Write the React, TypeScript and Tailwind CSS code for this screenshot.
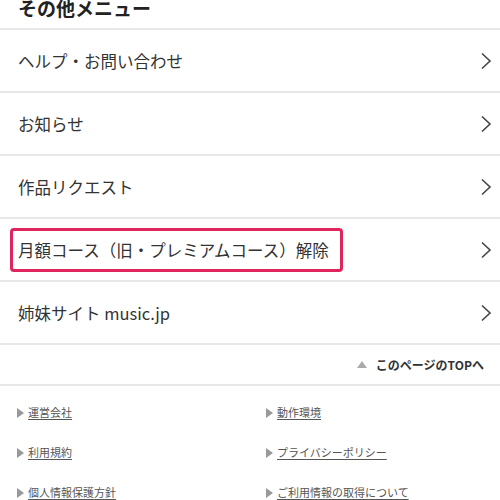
const menuItems = [
  { label: "ヘルプ・お問い合わせ" },
  { label: "お知らせ" },
  { label: "作品リクエスト" },
  { label: "月額コース（旧・プレミアムコース）解除", highlight: true },
  { label: "姉妹サイト music.jp" },
];

const footerLinks = [
  "運営会社",
  "動作環境",
  "利用規約",
  "プライバシーポリシー",
  "個人情報保護方針",
  "ご利用情報の取得について",
];

function Chevron() {
  return (
    <svg width="12" height="18" viewBox="0 0 12 18" fill="none" className="text-[#444]">
      <polyline points="2,1.5 10,9 2,16.5" stroke="currentColor" strokeWidth="1.6" />
    </svg>
  );
}

export default function App() {
  return (
    <div
      className="h-[500px] w-[500px] overflow-hidden bg-white text-[#333]"
      style={{ fontFamily: '"Noto Sans CJK JP", "Noto Sans", sans-serif' }}
    >
      {/* Section heading, scrolled partly out of view */}
      <div className="flex h-[30px] items-end border-b-2 border-[#e8e8e8] px-[18px] pb-[11px]">
        <h2 className="text-[19px] font-bold leading-none text-[#222]">その他メニュー</h2>
      </div>

      <ul>
        {menuItems.map((item) => (
          <li
            key={item.label}
            className="flex h-[63px] items-center justify-between border-b-2 border-[#e8e8e8] pr-[8px]"
          >
            {item.highlight ? (
              <span className="ml-[10px] rounded-[4px] border-[3px] border-[#e0245c] py-[6px] pl-[5px] pr-[11px] text-[16.5px] leading-[26px]">
                {item.label}
              </span>
            ) : (
              <span className="pl-[18px] text-[16.5px] leading-[26px]">{item.label}</span>
            )}
            <Chevron />
          </li>
        ))}
      </ul>

      <div className="flex h-[41px] items-center justify-end border-b-2 border-[#e8e8e8] pr-[16px]">
        <span className="mr-[9px] h-0 w-0 border-x-[5px] border-b-[7px] border-x-transparent border-b-[#aaa]" />
        <span className="text-[12px] font-bold text-[#333]">このページのTOPへ</span>
      </div>

      <div className="grid grid-cols-2 gap-y-[21px] pt-[17px]">
        {footerLinks.map((link, i) => (
          <div
            key={link}
            className={`flex items-center ${i % 2 === 0 ? "pl-[17px]" : "pl-[16px]"}`}
          >
            <span className="mr-[4px] h-0 w-0 border-y-[5px] border-l-[7px] border-y-transparent border-l-[#999]" />
            <a className="text-[11px] leading-[19px] text-[#555] underline underline-offset-2">
              {link}
            </a>
          </div>
        ))}
      </div>
    </div>
  );
}
